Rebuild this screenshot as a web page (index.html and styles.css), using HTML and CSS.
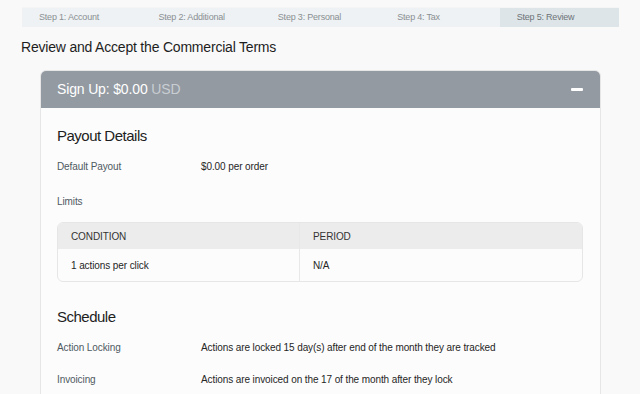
FILE: index.html
```html
<!DOCTYPE html>
<html>
<head>
<meta charset="utf-8">
<link rel="stylesheet" href="styles.css">
</head>
<body>
<div class="page">
  <div class="steps">
    <div class="step">Step 1: Account</div>
    <div class="step">Step 2: Additional</div>
    <div class="step">Step 3: Personal</div>
    <div class="step">Step 4: Tax</div>
    <div class="step step-active">Step 5: Review</div>
  </div>
  <h1 class="title">Review and Accept the Commercial Terms</h1>
  <div class="card">
    <div class="card-header">
      <span class="card-title">Sign Up: $0.00 <span class="currency">USD</span></span>
      <span class="minus"></span>
    </div>
    <div class="card-body">
      <h2 class="section-title">Payout Details</h2>
      <div class="detail-row first">
        <div class="detail-label">Default Payout</div>
        <div class="detail-value">$0.00 per order</div>
      </div>
      <div class="limits-label">Limits</div>
      <div class="limits-table">
        <div class="table-head">
          <div class="cell">CONDITION</div>
          <div class="cell cell-right">PERIOD</div>
        </div>
        <div class="table-row">
          <div class="cell">1 actions per click</div>
          <div class="cell cell-right">N/A</div>
        </div>
      </div>
      <h2 class="section-title schedule">Schedule</h2>
      <div class="detail-row first">
        <div class="detail-label">Action Locking</div>
        <div class="detail-value">Actions are locked 15 day(s) after end of the month they are tracked</div>
      </div>
      <div class="detail-row second">
        <div class="detail-label">Invoicing</div>
        <div class="detail-value">Actions are invoiced on the 17 of the month after they lock</div>
      </div>
    </div>
  </div>
</div>
</body>
</html>
```

FILE: styles.css
```css
* { box-sizing: border-box; }
html, body {
  margin: 0;
  padding: 0;
  background: #f9f9f9;
  font-family: "Liberation Sans", Arial, sans-serif;
  color: #222;
  overflow: hidden;
}
.page {
  padding: 7px 0 0 18px;
  width: 640px;
}
.steps {
  display: flex;
  width: 597px;
  height: 20px;
  margin-left: 4px;
  background: #eef2f4;
  border-top: 1px solid #f3f5f6;
}
.step {
  flex: 1;
  padding-left: 17px;
  font-size: 9px;
  letter-spacing: -0.2px;
  line-height: 19px;
  color: #8a8f93;
}
.step-active {
  background: #dde5e9;
  color: #6d7377;
}
.title {
  margin: 12px 0 0 3px;
  font-size: 14px;
  font-weight: normal;
  line-height: 16px;
  letter-spacing: -0.2px;
  color: #1e1e1e;
}
.card {
  margin: 15px 0 0 22px;
  width: 561px;
  border: 1px solid #e6e6e6;
  border-radius: 6px;
  background: #fcfcfc;
  overflow: hidden;
}
.card-header {
  display: flex;
  align-items: center;
  justify-content: space-between;
  height: 38px;
  margin: -1px -1px 0 -1px;
  padding: 0 18px 0 17px;
  background: #939aa2;
  border-radius: 6px 6px 0 0;
}
.card-title {
  color: #ffffff;
  font-size: 14px;
  letter-spacing: -0.15px;
}
.currency { color: #c9cdd2; }
.minus {
  width: 12px;
  height: 3px;
  background: #ffffff;
  border-radius: 1px;
}
.card-body {
  padding: 0 17px 20px 16px;
}
.section-title {
  margin: 18px 0 0 0;
  font-size: 15px;
  font-weight: normal;
  line-height: 20px;
  letter-spacing: -0.5px;
  color: #1e1e1e;
}
.section-title.schedule { margin-top: 25px; }
.detail-row {
  display: flex;
  font-size: 10px;
  line-height: 14px;
  letter-spacing: -0.1px;
}
.detail-row.first { margin-top: 14px; }
.detail-row.second { margin-top: 18px; }
.detail-label {
  width: 144px;
  color: #4f5a62;
}
.detail-value { color: #262626; }
.limits-label {
  margin-top: 21px;
  font-size: 10px;
  line-height: 14px;
  letter-spacing: -0.1px;
  color: #4f5a62;
}
.limits-table {
  margin-top: 13px;
  border: 1px solid #e6e6e6;
  border-radius: 6px;
  overflow: hidden;
  background: #fcfcfc;
}
.table-head, .table-row {
  display: grid;
  grid-template-columns: 241px 1fr;
  font-size: 10px;
  letter-spacing: -0.1px;
}
.table-head {
  height: 26px;
  background: #ececec;
  color: #333;
}
.table-row {
  height: 32px;
  color: #262626;
}
.cell {
  display: flex;
  align-items: center;
  padding-left: 13px;
}
.cell-right {
  border-left: 1px solid #e8e8e8;
}
```
